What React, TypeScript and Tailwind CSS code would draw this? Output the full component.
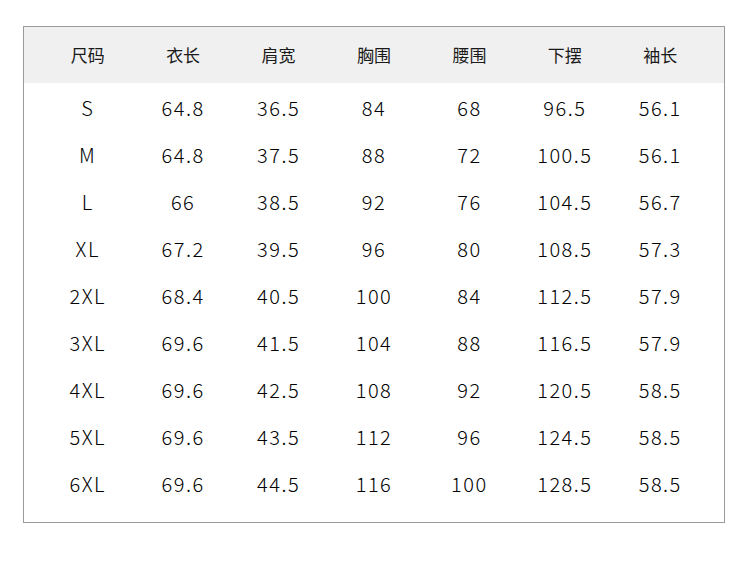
import React from "react";

const headers = ["尺码", "衣长", "肩宽", "胸围", "腰围", "下摆", "袖长"];
const rows = [
  ["S", "64.8", "36.5", "84", "68", "96.5", "56.1"],
  ["M", "64.8", "37.5", "88", "72", "100.5", "56.1"],
  ["L", "66", "38.5", "92", "76", "104.5", "56.7"],
  ["XL", "67.2", "39.5", "96", "80", "108.5", "57.3"],
  ["2XL", "68.4", "40.5", "100", "84", "112.5", "57.9"],
  ["3XL", "69.6", "41.5", "104", "88", "116.5", "57.9"],
  ["4XL", "69.6", "42.5", "108", "92", "120.5", "58.5"],
  ["5XL", "69.6", "43.5", "112", "96", "124.5", "58.5"],
  ["6XL", "69.6", "44.5", "116", "100", "128.5", "58.5"],
];

export default function App() {
  return (
    <div
      className="w-[750px] h-[567px] bg-white pt-[26px] pl-[23px]"
      style={{ fontFamily: '"Noto Sans CJK SC", "Noto Sans", sans-serif' }}
    >
      <div className="w-[702px] h-[497px] border border-[#9a9a9a] flex flex-col">
        <div className="h-[56px] bg-[#f0f0f0] grid grid-cols-7 items-center px-[16px] text-[17px] text-[#1a1a1a]">
          {headers.map((h) => (
            <div key={h} className="text-center">
              {h}
            </div>
          ))}
        </div>
        <div className="flex flex-col px-[16px] pt-[1px]">
          {rows.map((r, i) => (
            <div
              key={i}
              className="h-[47px] grid grid-cols-7 items-center text-[20px] font-light text-black tracking-[1.5px]"
            >
              {r.map((c, j) => (
                <div key={j} className="text-center">
                  {c}
                </div>
              ))}
            </div>
          ))}
        </div>
      </div>
    </div>
  );
}
